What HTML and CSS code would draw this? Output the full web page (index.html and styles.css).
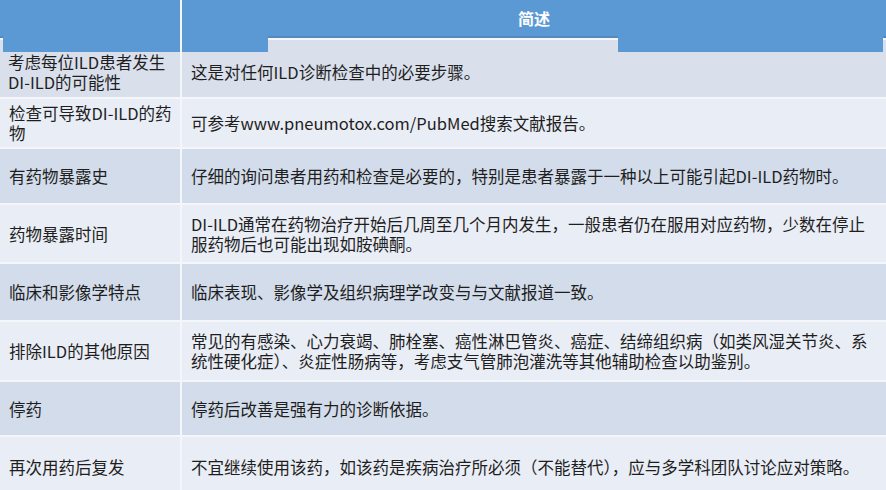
FILE: index.html
```html
<!DOCTYPE html>
<html>
<head>
<meta charset="utf-8">
<title>DI-ILD 诊断要点</title>
<link rel="stylesheet" href="styles.css">
</head>
<body>

<div class="table">
    <div class="head"></div>
    <div class="head">简述</div>

    <div class="cell dark first-left">考虑每位ILD患者发生<br>DI-ILD的可能性</div>
    <div class="cell dark first-right">这是对任何ILD诊断检查中的必要步骤。</div>

    <div class="cell light">检查可导致DI-ILD的药<br>物</div>
    <div class="cell light">可参考www.pneumotox.com/PubMed搜索文献报告。</div>

    <div class="cell dark">有药物暴露史</div>
    <div class="cell dark">仔细的询问患者用药和检查是必要的，特别是患者暴露于一种以上可能引起DI-ILD药物时。</div>

    <div class="cell light">药物暴露时间</div>
    <div class="cell light">DI-ILD通常在药物治疗开始后几周至几个月内发生，一般患者仍在服用对应药物，少数在停止<br>服药物后也可能出现如胺碘酮。</div>

    <div class="cell dark">临床和影像学特点</div>
    <div class="cell dark">临床表现、影像学及组织病理学改变与与文献报道一致。</div>

    <div class="cell light">排除ILD的其他原因</div>
    <div class="cell light">常见的有感染、心力衰竭、肺栓塞、癌性淋巴管炎、癌症、结缔组织病（如类风湿关节炎、系<br>统性硬化症）、炎症性肠病等，考虑支气管肺泡灌洗等其他辅助检查以助鉴别。</div>

    <div class="cell dark">停药</div>
    <div class="cell dark">停药后改善是强有力的诊断依据。</div>

    <div class="cell light">再次用药后复发</div>
    <div class="cell light">不宜继续使用该药，如该药是疾病治疗所必须（不能替代），应与多学科团队讨论应对策略。</div>
</div>

</body>
</html>
```

FILE: styles.css
```css
body {
    margin: 0;
    background: #ffffff;
    font-family: "Noto Sans CJK SC", "Liberation Sans", sans-serif;
    color: #1e1e1e;
    overflow: hidden;
}

.table {
    display: grid;
    grid-template-columns: 180px 1fr;
    grid-template-rows: 38px 57px 48px 54px 57px 56px 58px 53px 60px;
    column-gap: 2px;
    row-gap: 2px;
    width: 886px;
    background: #f4f6fa;
}

.head {
    background: #5b99d4;
    border-bottom: 2px solid #5589bf;
    color: white;
    font-weight: bold;
    font-size: 16px;
    display: flex;
    align-items: center;
    justify-content: center;
}

.cell {
    display: flex;
    align-items: center;
    font-size: 16.5px;
    line-height: 20px;
    padding: 0 8px;
}

.cell + .cell {
    padding-left: 9px;
}

.dark {
    background: #d2dcea;
}

.light {
    background: #e9edf5;
}

/* the header band spills over the top of the first row */
.first-left,
.first-right {
    margin-top: -4px;
    padding-top: 10px;
}

.first-left {
    background:
        linear-gradient(#5b99d4, #5b99d4) 3px 0 / 100% 16px no-repeat,
        linear-gradient(#5589bf, #5589bf) 0 0 / 100% 2px no-repeat,
        linear-gradient(#f4f6fa, #f4f6fa) 0 2px / 100% 2px no-repeat,
        #d9e0ec;
}

.first-right {
    background:
        linear-gradient(#5b99d4, #5b99d4) 0 0 / 86px 16px no-repeat,
        linear-gradient(#5b99d4, #5b99d4) 436px 0 / 265px 16px no-repeat,
        linear-gradient(#5589bf, #5589bf) 0 0 / 100% 2px no-repeat,
        linear-gradient(#f4f6fa, #f4f6fa) 0 2px / 100% 2px no-repeat,
        #d9e0ec;
}
```
